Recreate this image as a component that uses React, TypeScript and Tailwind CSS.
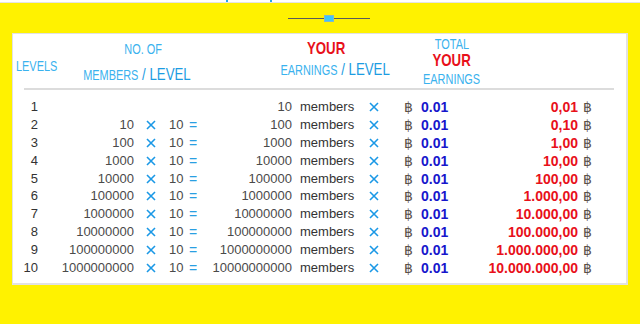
const rows = [
  { lv: "1", a: "", b: "10", total: "0,01" },
  { lv: "2", a: "10", b: "100", total: "0,10" },
  { lv: "3", a: "100", b: "1000", total: "1,00" },
  { lv: "4", a: "1000", b: "10000", total: "10,00" },
  { lv: "5", a: "10000", b: "100000", total: "100,00" },
  { lv: "6", a: "100000", b: "1000000", total: "1.000,00" },
  { lv: "7", a: "1000000", b: "10000000", total: "10.000,00" },
  { lv: "8", a: "10000000", b: "100000000", total: "100.000,00" },
  { lv: "9", a: "100000000", b: "1000000000", total: "1.000.000,00" },
  { lv: "10", a: "1000000000", b: "10000000000", total: "10.000.000,00" },
];

function Cross() {
  return (
    <svg width="10" height="10" viewBox="0 0 10 10" className="block">
      <path d="M1 1L9 9M9 1L1 9" stroke="#1a98e6" strokeWidth="1.6" />
    </svg>
  );
}

function Header() {
  // header lettering in the picture is condensed, so squeeze it horizontally
  const sq = "inline-block scale-x-[0.78]";
  return (
    <div className="flex h-[54px] text-[#3ab2ee]">
      <div className="w-[59px] pl-[3px] pt-[20px]">
        <div className={`${sq} origin-left h-[16px] text-[14px] leading-[16px]`}>LEVELS</div>
      </div>
      <div className="w-[143px] flex flex-col items-center pt-[7px]">
        <div className={`${sq} h-[16px] text-[14px] leading-[16px]`}>NO. OF</div>
        <div className={`${sq} mt-[8px] mr-[13px] h-[20px] leading-[20px] whitespace-nowrap`}>
          <span className="text-[14px]">MEMBERS</span>
          <span className="text-[17px] text-[#1c9ce2]"> / LEVEL</span>
        </div>
      </div>
      <div className="w-[65px]" />
      <div className="w-[110px] flex flex-col items-center pt-[6px]">
        <div className={`${sq} h-[18px] pr-[23px] text-[17px] leading-[18px] font-bold text-[#e8101a]`}>YOUR</div>
        <div className={`${sq} mt-[2px] h-[20px] leading-[20px] whitespace-nowrap`}>
          <span className="text-[14px]">EARNINGS</span>
          <span className="text-[17px] text-[#1c9ce2]"> / LEVEL</span>
        </div>
      </div>
      <div className="w-[20px]" />
      <div className="w-[84px] flex flex-col items-center pt-[2px]">
        <div className={`${sq} h-[16px] text-[14px] leading-[16px]`}>TOTAL</div>
        <div className={`${sq} h-[18px] text-[17px] leading-[18px] font-bold text-[#e8101a]`}>YOUR</div>
        <div className={`${sq} mt-[1px] h-[16px] text-[14px] leading-[16px]`}>EARNINGS</div>
      </div>
    </div>
  );
}

export default function App() {
  return (
    <div className="w-[640px] h-[324px] overflow-hidden bg-[#fff200] font-['Liberation_Sans',Arial,sans-serif]">
      <div className="h-[3px] bg-white border-b border-[#e4e4e4] flex">
        <span className="ml-[226px] w-[2px] h-[2px] bg-[#2aa6e8]" />
        <span className="ml-[42px] w-[2px] h-[2px] bg-[#2aa6e8]" />
      </div>
      <div className="h-[30px] flex items-start justify-center pt-[12px] pl-[18px]">
        <div className="flex items-center w-[82px]">
          <div className="h-px w-[36px] bg-[#5b5b5b]" />
          <div className="h-[7px] w-[10px] bg-[#3cc6f6] border border-[#7fb7cf]" />
          <div className="h-px w-[36px] bg-[#5b5b5b]" />
        </div>
      </div>
      <div className="ml-[12px] w-[616px] h-[252px] bg-white border border-[#e2e2e2] border-r-2 border-b-2">
        <Header />
        <div className="ml-[11px] mr-[12px] h-[2px] bg-[#dcdcdc]" />
        <div className="pt-[8px] flex flex-col">
          {rows.map((r) => (
            <div key={r.lv} className="flex items-center h-[17.9px] text-[13px] leading-[18px] text-[#4a4a4a] whitespace-nowrap">
              <span className="w-[25px] text-right text-[#333]">{r.lv}</span>
              <span className="w-[96px] text-right">{r.a}</span>
              <span className="w-[34px] flex justify-center">{r.a && <Cross />}</span>
              <span className="w-[21px] pl-[1px]">{r.a && "10"}</span>
              <span className="w-[15px] text-[14px] text-[#2a9fe2]">{r.a && "="}</span>
              <span className="w-[88px] text-right">{r.b}</span>
              <span className="w-[68px] pl-[8px] text-[#333]">members</span>
              <span className="w-[28px] flex justify-center"><Cross /></span>
              <span className="w-[16px]" />
              <span className="w-[17px] text-[14px] text-[#5a5048] font-['Liberation_Sans','DejaVu_Sans',sans-serif]">฿</span>
              <span className="w-[50px] text-[14px] font-bold text-[#1616cc]">0.01</span>
              <span className="w-[107px] text-right text-[14px] font-bold text-[#e8101a]">{r.total}</span>
              <span className="pl-[5px] text-[14px] text-[#5a5048] font-['Liberation_Sans','DejaVu_Sans',sans-serif]">฿</span>
            </div>
          ))}
        </div>
      </div>
    </div>
  );
}
